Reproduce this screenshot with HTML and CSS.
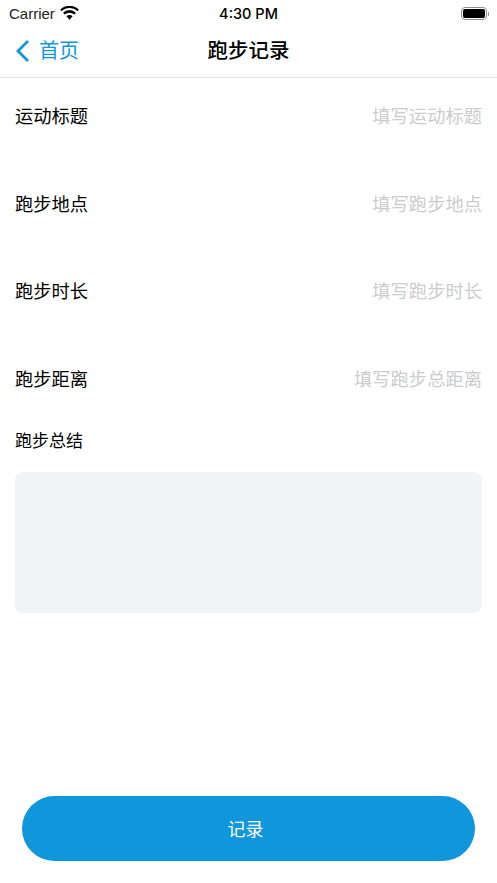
FILE: index.html
```html
<!DOCTYPE html>
<html lang="zh">
<head>
<meta charset="utf-8">
<title>跑步记录</title>
<link rel="stylesheet" href="styles.css">
</head>
<body>
<div class="page">
  <header class="status">
    <div class="status-left">
      <span>Carrier</span>
      <svg class="wifi" viewBox="0 0 20 15" width="19" height="14"><path d="M10 14.6 6.7 11a4.7 4.7 0 0 1 6.6 0zM4.9 9.2 3.1 7.2a9.9 9.9 0 0 1 13.8 0l-1.8 2a7.3 7.3 0 0 0-10.2 0zM1.6 5.6 0 3.7a14.6 14.6 0 0 1 20 0l-1.6 1.9a12.2 12.2 0 0 0-16.8 0z" fill="#000"/></svg>
    </div>
    <div class="status-time">4:30 PM</div>
    <div class="status-right">
      <div class="battery"><div class="battery-fill"></div></div>
      <div class="battery-cap"></div>
    </div>
  </header>
  <nav class="nav">
    <div class="back">
      <svg viewBox="0 0 15 24" width="15" height="24"><path d="M13 2 3 12l10 10" fill="none" stroke="#1296db" stroke-width="2.8"/></svg>
      <span>首页</span>
    </div>
    <div class="nav-title">跑步记录</div>
  </nav>
  <main class="form">
    <div class="row"><span class="label">运动标题</span><span class="hint">填写运动标题</span></div>
    <div class="row"><span class="label">跑步地点</span><span class="hint">填写跑步地点</span></div>
    <div class="row"><span class="label">跑步时长</span><span class="hint">填写跑步时长</span></div>
    <div class="row"><span class="label">跑步距离</span><span class="hint">填写跑步总距离</span></div>
    <div class="summary-label">跑步总结</div>
    <div class="summary-box"></div>
  </main>
  <div class="action"><button class="record">记录</button></div>
</div>
</body>
</html>
```
FILE: styles.css
```css
* { box-sizing: border-box; }
html, body { margin: 0; padding: 0; background: #fff; }
body { font-family: "Liberation Sans", "Noto Sans CJK SC", sans-serif; color: #000; }
.page { width: 497px; height: 883px; display: flex; flex-direction: column; overflow: hidden; }
.status { height: 27px; position: relative; display: flex; justify-content: space-between; align-items: center; padding: 0 8px 0 9px; font-size: 15px; flex: none; }
.status-left { display: flex; align-items: center; gap: 5px; color: #222; }
.wifi { margin-top: -2px; }
.status-time { position: absolute; left: 0; right: 0; text-align: center; font-weight: 500; font-family: "Inter", "Liberation Sans", sans-serif; font-size: 14.5px; }
.status-right { display: flex; align-items: center; gap: 1px; }
.battery { width: 26px; height: 13px; border: 1px solid #8e8e8e; border-radius: 4px; padding: 1px; }
.battery-fill { width: 100%; height: 100%; background: #000; border-radius: 2px; }
.battery-cap { width: 1.5px; height: 4px; background: #8e8e8e; border-radius: 0 1px 1px 0; }
.nav { height: 51px; position: relative; display: flex; align-items: center; justify-content: center; padding-bottom: 6px; border-bottom: 1px solid #e2e2e2; flex: none; }
.back { position: absolute; left: 15px; top: 12px; display: flex; align-items: center; gap: 9px; color: #1296db; font-size: 20px; line-height: 24px; }
.nav-title { font-size: 20.5px; font-weight: 500; }
.form { padding: 0 15px; flex: none; }
.row { height: 87.6px; padding-top: 25px; display: flex; justify-content: space-between; font-size: 18.3px; line-height: 28px; }
.hint { color: #cccccc; }
.summary-label { font-size: 17px; line-height: 24px; margin-top: 2px; }
.summary-box { height: 141px; margin-top: 18px; background: #f0f4f5; border-radius: 8px; }
.action { margin-top: auto; padding: 0 22px 22px; }
.record { display: block; width: 453px; height: 65px; border: 0; border-radius: 33px; background: #1096db; color: #fff; font: inherit; font-size: 18px; padding: 0 6px 2px 0; }
```
